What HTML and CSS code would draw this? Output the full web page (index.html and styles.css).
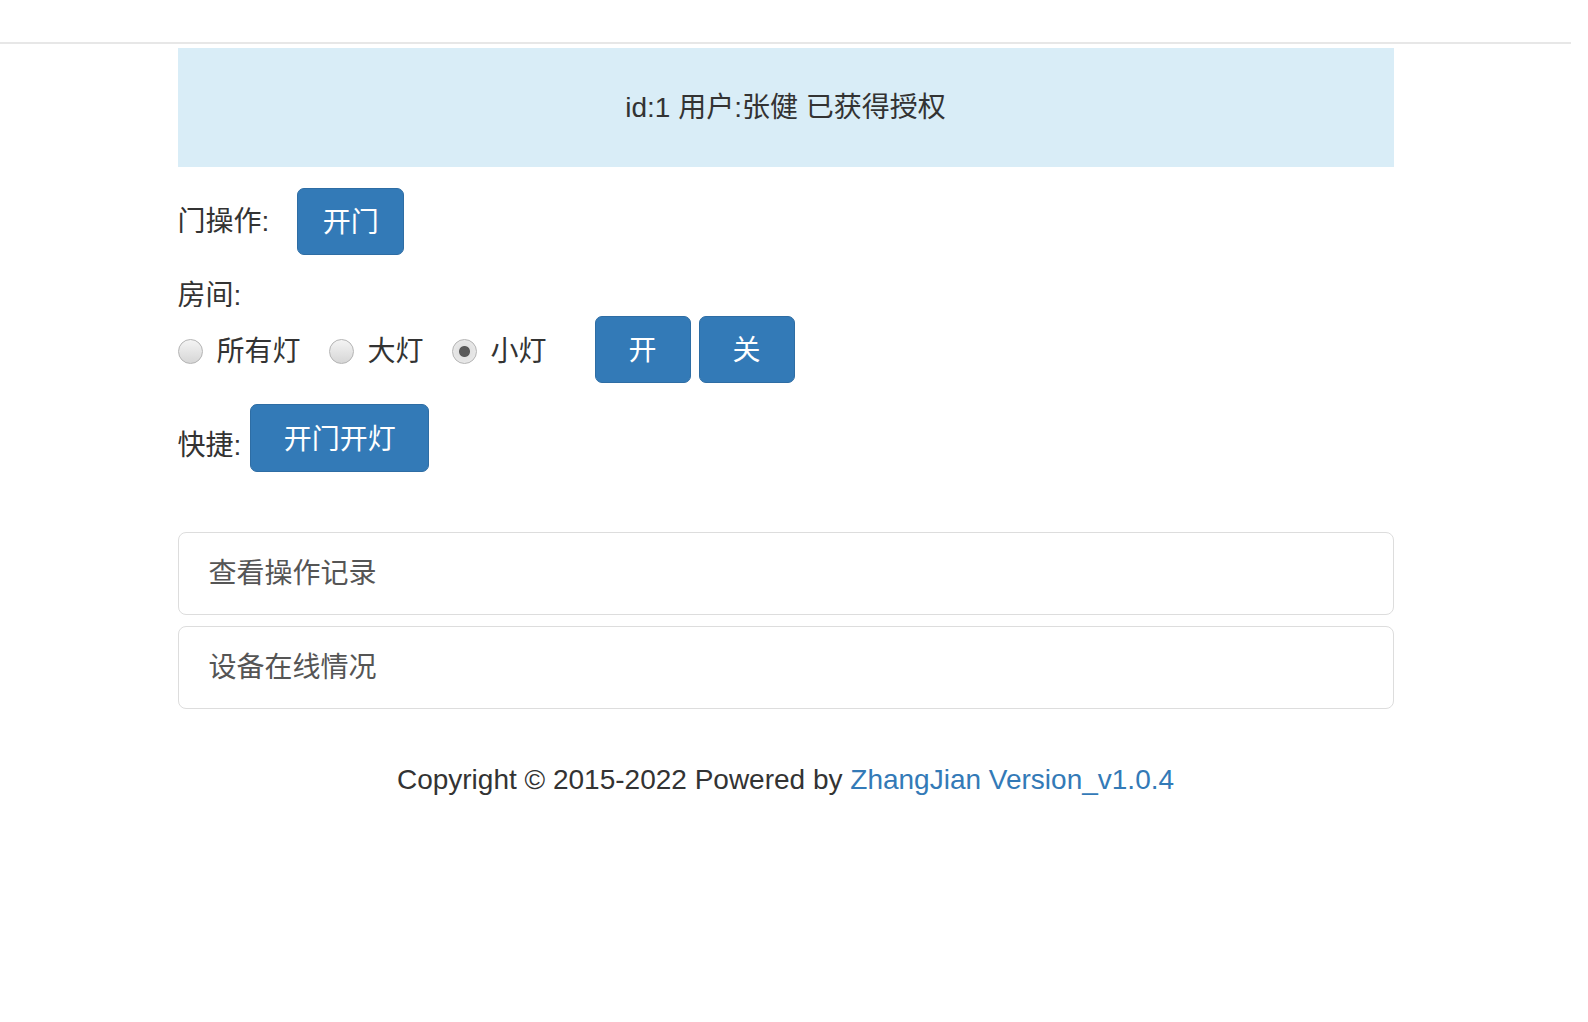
FILE: index.html
```html
<!DOCTYPE html>
<html lang="zh-CN">
<head>
    <meta charset="UTF-8">
    <meta name="viewport" content="width=device-width, initial-scale=1.0">
    <title>门禁控制</title>
    <link rel="stylesheet" href="styles.css">
</head>
<body>
    <nav class="topbar"></nav>

    <div class="container">
        <div class="alert-info">id:1 用户:张健 已获得授权</div>

        <div class="row door-row">
            <span class="label">门操作:</span>
            <button class="btn btn-door">开门</button>
        </div>

        <div class="room-title">房间:</div>
        <div class="row light-row">
            <label class="radio"><input type="radio" name="light"><span>所有灯</span></label>
            <label class="radio"><input type="radio" name="light"><span>大灯</span></label>
            <label class="radio"><input type="radio" name="light" checked><span>小灯</span></label>
            <div class="btn-group">
                <button class="btn btn-single">开</button>
                <button class="btn btn-single">关</button>
            </div>
        </div>

        <div class="row quick-row">
            <span class="label">快捷:</span>
            <button class="btn btn-quick">开门开灯</button>
        </div>

        <div class="panel">查看操作记录</div>
        <div class="panel">设备在线情况</div>

        <footer>
            Copyright &copy; 2015-2022 Powered by <a href="#">ZhangJian Version_v1.0.4</a>
        </footer>
    </div>
</body>
</html>
```

FILE: styles.css
```css
body {
    font-family: "Liberation Sans", "Noto Sans CJK SC", sans-serif;
    font-size: 28px;
    margin: 0;
    padding: 0 17px 0 0;
    background: #fff;
    color: #333;
}

.topbar {
    height: 42px;
    background: #fff;
    border-bottom: 2px solid #e7e7e7;
}

.container {
    width: 1216px;
    margin: 4px auto 0;
}

.alert-info {
    background-color: #d9edf7;
    color: #333;
    text-align: center;
    line-height: 39px;
    padding: 40px 0;
}

.row {
    display: flex;
    align-items: center;
}

.label {
    line-height: 39px;
}

.door-row {
    margin-top: 21px;
}

.door-row .label {
    margin-right: 28px;
}

.room-title {
    margin-top: 21px;
    line-height: 39px;
}

.light-row {
    height: 67px;
    margin-top: 1px;
}

.radio {
    display: flex;
    align-items: center;
    margin: 4px 28px 0 0;
    line-height: 39px;
    cursor: pointer;
}

.radio input {
    appearance: none;
    -webkit-appearance: none;
    width: 25px;
    height: 25px;
    margin: 0 14px 0 0;
    border: 1px solid #b4b4b4;
    border-radius: 50%;
    background: linear-gradient(to bottom, #f4f4f4, #d6d6d6);
    box-sizing: border-box;
}

.radio input:checked {
    background: radial-gradient(circle, #5a5a5a 0, #5a5a5a 5px, #e2e2e2 6px, #ededed 100%);
}

.btn-group {
    display: flex;
    gap: 8px;
    margin-left: 20px;
}

.btn {
    font-family: inherit;
    font-size: 28px;
    color: #fff;
    background-color: #337ab7;
    border: 1px solid #2e6da4;
    border-radius: 7px;
    height: 67px;
    padding: 0 0 3px;
    cursor: pointer;
}

.btn:hover {
    background-color: #286090;
}

.btn-door {
    width: 107px;
}

.btn-single {
    width: 96px;
}

.quick-row {
    margin-top: 21px;
}

.quick-row .label {
    margin: 14px 9px 0 0;
}

.btn-quick {
    width: 179px;
    height: 68px;
}

.panel {
    border: 1px solid #ddd;
    border-radius: 8px;
    color: #555;
    line-height: 40px;
    padding: 21px 30px 20px;
    margin-top: 11px;
}

.quick-row + .panel {
    margin-top: 60px;
}

footer {
    margin-top: 51px;
    line-height: 39px;
    text-align: center;
}

footer a {
    color: #337ab7;
    text-decoration: none;
}
```
